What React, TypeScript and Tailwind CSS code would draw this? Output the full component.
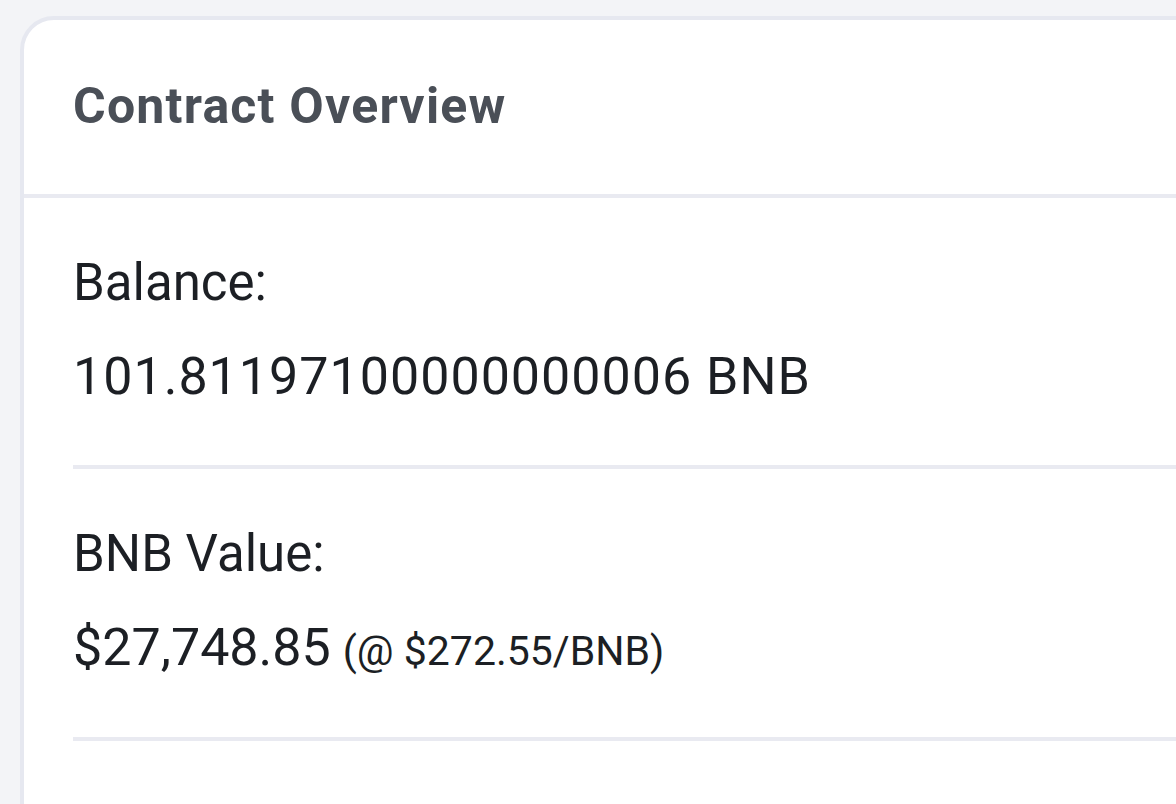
import React from 'react';

const ROWS = [
  { label: 'Balance:', value: '101.81197100000000006 BNB', wide: true },
  { label: 'BNB Value:', value: '$27,748.85', extra: '(@ $272.55/BNB)', wide: false },
];

export default function App() {
  return (
    <div
      className="h-[804px] w-[1176px] overflow-hidden bg-[#f3f4f7] pl-[20px] pt-[16px]"
      style={{ fontFamily: 'Roboto, "Noto Sans", sans-serif' }}
    >
      {/* Card (runs off the right and bottom edges) */}
      <div className="w-[1220px] h-[900px] rounded-tl-[34px] border-[4px] border-[#e6e8f0] bg-white">
        {/* Header */}
        <div className="h-[178px] border-b-[4px] border-[#e9eaf1] pl-[49px] pt-[58px]">
          <h2 className="text-[50px] leading-[56px] font-bold tracking-[1.2px] text-[#4a4f57]">Contract Overview</h2>
        </div>

        {/* Rows */}
        <div className="px-[49px]">
          {ROWS.map((row, i) => (
            <div
              key={row.label}
              className={`border-b-[4px] border-[#e9eaf1] pt-[57px] ${i === 0 ? 'pb-[58px]' : 'pb-[56px]'}`}
            >
              <div className="text-[51px] leading-[56px] text-[#1c1f24]">{row.label}</div>
              <div
                className={`mt-[36px] text-[52px] leading-[60px] text-[#1c1f24] ${row.wide ? 'tracking-[1px]' : ''}`}
              >
                {row.value}
                {row.extra && <span className="ml-[12px] text-[41px]">{row.extra}</span>}
              </div>
            </div>
          ))}
        </div>
      </div>
    </div>
  );
}
